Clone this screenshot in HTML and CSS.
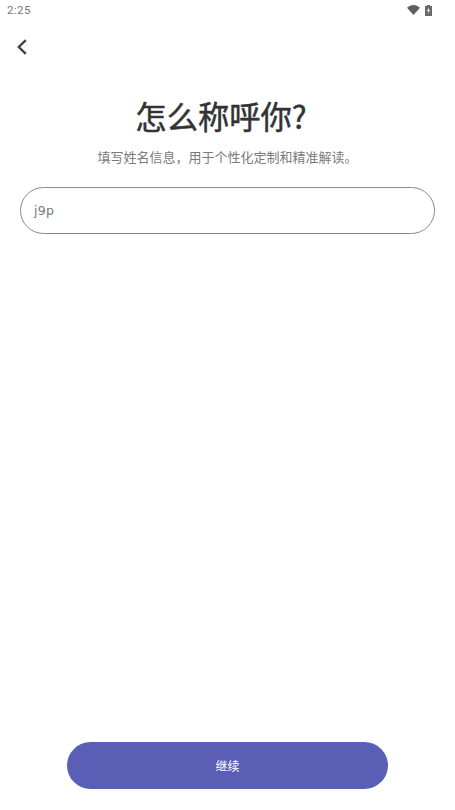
FILE: index.html
```html
<!DOCTYPE html>
<html lang="zh-CN">
<head>
    <meta charset="UTF-8">
    <meta name="viewport" content="width=device-width, initial-scale=1.0">
    <title>怎么称呼你</title>
    <link rel="stylesheet" href="styles.css">
</head>
<body>
    <div class="screen">
        <div class="status-bar">
            <span class="time">2:25</span>
            <div class="status-icons">
                <svg class="wifi" width="13" height="10" viewBox="0 0 13 10"><path d="M0 2.800C1.800 1.100 4 0 6.500 0S11.200 1.100 13 2.800L6.500 10z" fill="#5f5f5f"/></svg>
                <svg class="battery" width="7" height="11" viewBox="0 0 7 11"><path d="M2 0h3v1h2v10H0V1h2z" fill="#6a6a6a"/><path d="M3.800 2.500L2 6h1.200v2.500L5 5H3.800z" fill="#fff"/></svg>
            </div>
        </div>
        <div class="top-bar">
            <svg class="back" width="12" height="16" viewBox="0 0 12 16"><path d="M9.800 1.200L2.800 8l7 6.800" fill="none" stroke="#444" stroke-width="2.400"/></svg>
        </div>
        <h1 class="title">怎么称呼你?</h1>
        <p class="subtitle">填写姓名信息，用于个性化定制和精准解读。</p>
        <div class="name-field">
            <span class="name-value">j9p</span>
        </div>
        <div class="spacer"></div>
        <button class="continue">继续</button>
    </div>
</body>
</html>
```
FILE: styles.css
```css
* {
    box-sizing: border-box;
}

html, body {
    margin: 0;
    height: 100%;
    background: #fff;
}

body {
    font-family: "Noto Sans CJK SC", "Noto Sans", sans-serif;
}

.screen {
    display: flex;
    flex-direction: column;
    width: 455px;
    height: 810px;
    padding-bottom: 21px;
}

.status-bar {
    display: flex;
    justify-content: space-between;
    align-items: center;
    height: 20px;
    padding: 0 23px 0 7px;
}

.time {
    font-family: Roboto, sans-serif;
    font-size: 11.500px;
    letter-spacing: 0.4px;
    color: #777;
}

.status-icons {
    display: flex;
    align-items: center;
    gap: 5px;
}

.top-bar {
    display: flex;
    align-items: center;
    height: 54px;
    padding-left: 16px;
}

.title {
    margin: 20px 0 0;
    padding-right: 13px;
    font-size: 31.300px;
    line-height: 44px;
    font-weight: 400;
    -webkit-text-stroke: 0.5px #333;
    color: #333;
    text-align: center;
}

.subtitle {
    margin: 10px 0 0;
    font-size: 13px;
    line-height: 18px;
    color: #7a7a7a;
    text-align: center;
}

.name-field {
    display: flex;
    align-items: center;
    height: 47px;
    margin: 21px 20px 0;
    padding: 0 13px;
    border: 1px solid #8a8a8a;
    border-radius: 24px;
}

.name-value {
    font-family: "DejaVu Sans", sans-serif;
    font-size: 12.500px;
    letter-spacing: 0.3px;
    color: #777;
}

.spacer {
    flex: 1;
}

.continue {
    display: block;
    width: 321px;
    height: 47px;
    margin: 0 0 0 67px;
    border: none;
    border-radius: 24px;
    background: #5a5fb5;
    color: #fff;
    font-family: inherit;
    font-size: 12px;
}
```
